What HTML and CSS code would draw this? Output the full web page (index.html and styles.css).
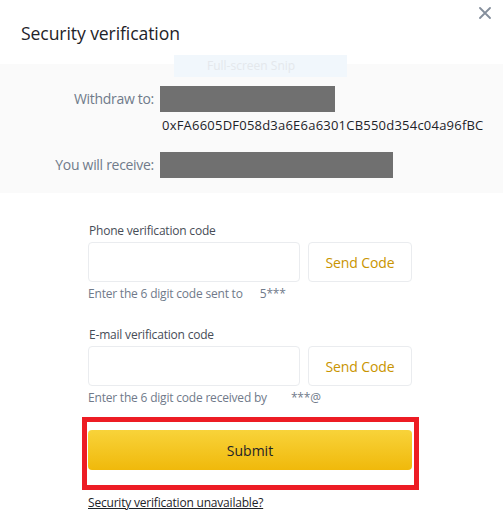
FILE: index.html
```html
<!DOCTYPE html>
<html>
<head>
<meta charset="utf-8">
<link rel="stylesheet" href="styles.css">
</head>
<body>
<div class="modal">
  <div class="header">
    <h1 class="title">Security verification</h1>
    <button class="close" aria-label="Close">
      <svg width="12" height="12" viewBox="0 0 12 12"><path d="M1 1L11 11M11 1L1 11" stroke="#848e9c" stroke-width="1.8" stroke-linecap="round"/></svg>
    </button>
  </div>
  <div class="snip">Full-screen Snip</div>
  <div class="summary">
    <div class="row">
      <div class="label">Withdraw to:</div>
      <div class="value">
        <div class="redact r1"></div>
        <div class="address">0xFA6605DF058d3a6E6a6301CB550d354c04a96fBC</div>
      </div>
    </div>
    <div class="row">
      <div class="label">You will receive:</div>
      <div class="value"><div class="redact r2"></div></div>
    </div>
  </div>
  <div class="form">
    <div class="field-label">Phone verification code</div>
    <div class="input-row">
      <div class="input"></div>
      <button class="send">Send Code</button>
    </div>
    <div class="hint">Enter the 6 digit code sent to<span class="masked m1">5***</span></div>

    <div class="field-label second">E-mail verification code</div>
    <div class="input-row">
      <div class="input"></div>
      <button class="send">Send Code</button>
    </div>
    <div class="hint">Enter the 6 digit code received by<span class="masked m2">***@</span></div>

    <div class="highlight">
      <button class="submit">Submit</button>
    </div>
    <a class="link" href="#">Security verification unavailable?</a>
  </div>
</div>
</body>
</html>
```

FILE: styles.css
```css
* { box-sizing: border-box; }
html, body { margin: 0; padding: 0; background: #fff; }
body {
  font-family: "Open Sans", "Noto Sans", sans-serif;
  color: #1e2329;
  width: 503px;
  height: 532px;
  overflow: hidden;
}
.modal { position: relative; width: 503px; }
.header {
  display: flex;
  justify-content: space-between;
  align-items: flex-start;
  height: 64px;
  padding: 0 12px 0 21px;
}
.title {
  margin: 22px 0 0;
  font-size: 17.6px;
  font-weight: 400;
  line-height: 22px;
  color: #1e2329;
  letter-spacing: -0.1px;
}
.close {
  border: 0;
  background: none;
  padding: 0;
  margin-top: 7px;
  width: 12px;
  height: 12px;
  display: flex;
}
.snip {
  position: absolute;
  left: 174px;
  top: 55px;
  width: 173px;
  height: 22px;
  background: #f1f7fc;
  color: #e4e8ec;
  font-size: 12px;
  line-height: 22px;
  padding-left: 33px;
}
.summary {
  background: #fafafa;
  padding: 22px 0 15px;
  display: flex;
  flex-direction: column;
  gap: 14px;
}
.row {
  display: grid;
  grid-template-columns: 154px 1fr;
  column-gap: 6px;
}
.label {
  text-align: right;
  font-size: 14px;
  letter-spacing: -0.3px;
  color: #707a8a;
  line-height: 26px;
}
.value { display: flex; flex-direction: column; }
.redact { background: #707070; height: 26px; }
.r1 { width: 175px; }
.r2 { width: 233px; }
.address {
  font-size: 13px;
  line-height: 26px;
  color: #1e2329;
  padding-left: 2px;
  letter-spacing: 0.22px;
}
.form {
  padding: 29px 91px 0 88px;
  display: flex;
  flex-direction: column;
}
.field-label {
  font-size: 12px;
  line-height: 18px;
  letter-spacing: -0.2px;
  color: #474d57;
  margin-bottom: 2px;
  padding-left: 1px;
}
.field-label.second { margin-top: 23px; }
.input-row {
  display: flex;
  gap: 8px;
  height: 40px;
}
.input {
  width: 212px;
  border: 1px solid #eaecef;
  border-radius: 4px;
  background: #fff;
}
.send {
  flex: 1;
  border: 1px solid #eaecef;
  border-radius: 4px;
  background: #fff;
  color: #c99400;
  font-family: inherit;
  font-size: 14px;
  letter-spacing: -0.1px;
  padding: 0;
}
.hint {
  font-size: 12px;
  line-height: 18px;
  letter-spacing: -0.2px;
  color: #707a8a;
  margin-top: 3px;
}
.masked { color: #707a8a; }
.m1 { margin-left: 17px; }
.m2 { margin-left: 24px; }
.highlight {
  margin: 10px -7px 0 -6px;
  border: 5px solid #ed1c24;
  padding: 8px 2px 15px 1px;
}
.submit {
  width: 100%;
  height: 40px;
  border: 0;
  border-radius: 4px;
  background: linear-gradient(180deg, #f8d33a 0%, #f0b90b 100%);
  color: #1e2329;
  font-family: inherit;
  font-size: 14px;
  font-weight: 500;
}
.link {
  margin-top: 4px;
  font-size: 12px;
  line-height: 18px;
  letter-spacing: -0.2px;
  color: #1e2329;
  text-decoration: underline;
  align-self: flex-start;
}
```
